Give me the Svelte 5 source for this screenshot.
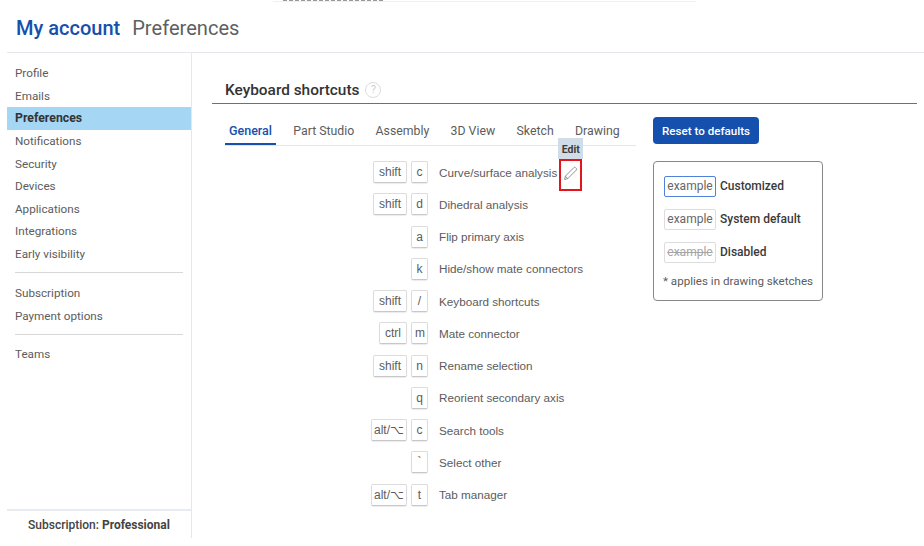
<script lang="ts">
  const menuGroups = [
    ["Profile", "Emails", "Preferences", "Notifications", "Security", "Devices", "Applications", "Integrations", "Early visibility"],
    ["Subscription", "Payment options"],
    ["Teams"],
  ];
  const tabs = ["General", "Part Studio", "Assembly", "3D View", "Sketch", "Drawing"];
  const shortcuts = [
    { mod: "shift", key: "c", label: "Curve/surface analysis", editing: true },
    { mod: "shift", key: "d", label: "Dihedral analysis" },
    { mod: "", key: "a", label: "Flip primary axis" },
    { mod: "", key: "k", label: "Hide/show mate connectors" },
    { mod: "shift", key: "/", label: "Keyboard shortcuts" },
    { mod: "ctrl", key: "m", label: "Mate connector" },
    { mod: "shift", key: "n", label: "Rename selection" },
    { mod: "", key: "q", label: "Reorient secondary axis" },
    { mod: "alt/⌥", key: "c", label: "Search tools" },
    { mod: "", key: "`", label: "Select other" },
    { mod: "alt/⌥", key: "t", label: "Tab manager" },
  ];
</script>

<div class="page">
  <div class="topstrip"><span class="cut"></span></div>
  <header>
    <h1>My account</h1>
    <span class="crumb">Preferences</span>
  </header>
  <div class="body">
    <aside>
      <nav>
        {#each menuGroups as group, g}
          {#if g > 0}<hr />{/if}
          {#each group as item}
            <div class="item" class:active={item === "Preferences"}>{item}</div>
          {/each}
        {/each}
      </nav>
      <div class="plan">Subscription: <b>Professional</b></div>
    </aside>
    <main>
      <div class="title">
        <h2>Keyboard shortcuts</h2>
        <span class="help">?</span>
      </div>
      <div class="columns">
        <section>
          <div class="tabs">
            {#each tabs as tab, i}
              <div class="tab" class:on={i === 0}>{tab}</div>
            {/each}
          </div>
          <div class="rows">
            {#each shortcuts as s}
              <div class="row">
                <div class="keys">
                  {#if s.mod}<kbd class:tight={s.mod.length > 4 && s.mod !== "shift"}>{s.mod}</kbd>{/if}
                  <kbd class="single">{s.key}</kbd>
                </div>
                <span class="label">{s.label}</span>
                {#if s.editing}
                  <span class="edit">
                    <span class="tip">Edit</span>
                    <svg width="15" height="15" viewBox="0 0 16 16" fill="none" stroke="#8a8a8a" stroke-width="1">
                      <path d="M2.5 10.8 11.6 1.7a1.2 1.2 0 0 1 1.7 0l.9.9a1.2 1.2 0 0 1 0 1.7L5.1 13.4 1.7 14.4z" />
                      <path d="M2.5 10.8 5.1 13.4" />
                    </svg>
                  </span>
                {/if}
              </div>
            {/each}
          </div>
        </section>
        <section class="side">
          <button>Reset to defaults</button>
          <div class="legend">
            <div class="lrow"><span class="sample custom">example</span><b>Customized</b></div>
            <div class="lrow"><span class="sample">example</span><b>System default</b></div>
            <div class="lrow"><span class="sample off">example</span><b>Disabled</b></div>
            <div class="note">* applies in drawing sketches</div>
          </div>
        </section>
      </div>
    </main>
  </div>
</div>

<style>
  :global(body) {
    margin: 0;
    background: #fff;
  }

  .page {
    width: 924px;
    height: 546px;
    overflow: hidden;
    font-family: Roboto, "Liberation Sans", sans-serif;
    color: #555;
    box-sizing: border-box;
    padding-left: 7px;
  }

  .topstrip {
    height: 2px;
    margin-left: 266px;
    width: 423px;
    border-bottom: 1px solid #f0f0f0;
    box-sizing: border-box;
    padding-left: 10px;
  }

  /* only the bottom edge of a text line is left in the source crop */
  .cut {
    display: block;
    width: 100px;
    height: 1px;
    background: repeating-linear-gradient(90deg, #999 0 4px, #fff 4px 6px);
  }

  header {
    height: 51px;
    box-sizing: border-box;
    border-bottom: 1px solid #e4e8ee;
    display: flex;
    align-items: baseline;
    gap: 12px;
    padding: 14px 0 0 9px;
  }

  h1 {
    margin: 0;
    font-size: 20px;
    font-weight: 500;
    color: #1650ae;
  }

  .crumb {
    font-size: 20.1px;
    color: #5f5f5f;
  }

  .body {
    display: flex;
    height: 485px;
  }

  aside {
    width: 185px;
    box-sizing: border-box;
    border-right: 1px solid #e4e8ee;
    display: flex;
    flex-direction: column;
    justify-content: space-between;
    padding-top: 9.3px;
  }

  .item {
    height: 22.6px;
    line-height: 22.6px;
    padding-left: 8px;
    font-size: 11.7px;
    color: #5c5c5c;
  }

  .item.active {
    background: #a5d6f4;
    color: #333;
    font-size: 12.3px;
    font-weight: 700;
  }

  hr {
    border: 0;
    border-top: 1px solid #d8d8d8;
    margin: 6px 8px 8px 8px;
  }

  hr:first-of-type {
    margin-bottom: 9.7px;
  }

  .plan {
    height: 29px;
    box-sizing: border-box;
    border-top: 2px solid #e8ecf1;
    font-size: 12px;
    font-weight: 500;
    color: #444;
    text-align: center;
    line-height: 29px;
  }

  .plan b {
    font-weight: 700;
  }

  main {
    flex: 1;
    padding: 25px 7px 0 20px;
  }

  .title {
    display: flex;
    align-items: center;
    gap: 6px;
    height: 24px;
    padding: 0 0 1px 13px;
    border-bottom: 1px solid #707070;
  }

  h2 {
    margin: 0;
    font-size: 15.4px;
    font-weight: 500;
    color: #333;
  }

  .help {
    width: 14px;
    height: 14px;
    border: 1px solid #ddd;
    border-radius: 50%;
    font-size: 10.5px;
    text-align: center;
    line-height: 14px;
    color: #ccc;
  }

  .columns {
    display: flex;
    gap: 17px;
    padding-left: 13px;
  }

  section {
    width: 411px;
  }

  .tabs {
    margin-top: 14px;
    display: flex;
    gap: 13.3px;
    height: 27px;
    border-bottom: 1px solid #e6e6e6;
  }

  .tab {
    padding: 0 4px;
    font-size: 12.3px;
    line-height: 26px;
    color: #5c5c5c;
    height: 27px;
    box-sizing: border-box;
    white-space: nowrap;
  }

  .tab.on {
    color: #1650ae;
    font-weight: 500;
    font-size: 12.5px;
    border-bottom: 2px solid #1650ae;
  }

  .rows {
    padding-top: 10px;
  }

  .row {
    height: 32.25px;
    display: flex;
    align-items: center;
    font-family: "Liberation Sans", Arial, sans-serif;
    font-size: 11.7px;
    color: #5c5c5c;
  }

  .keys {
    width: 203px;
    display: flex;
    justify-content: flex-end;
    gap: 4px;
    margin-right: 11px;
  }

  kbd {
    font: inherit;
    font-size: 12px;
    height: 20px;
    line-height: 20px;
    padding: 0 5px;
    border: 1px solid #dcdcdc;
    border-bottom-color: #c8c8c8;
    border-radius: 2px;
    text-align: center;
    box-shadow: 0 1px 1px rgba(0, 0, 0, 0.08);
  }

  kbd.tight {
    padding: 0 2px;
  }

  kbd.single {
    width: 9px;
    padding: 0 3px;
  }

  .edit {
    position: relative;
    width: 23px;
    height: 32px;
    border: 2px solid #e5131b;
    box-sizing: border-box;
    margin: 6px 0 0 2px;
    display: flex;
    align-items: center;
    justify-content: center;
    padding-bottom: 4px;
  }

  .tip {
    position: absolute;
    left: -3px;
    bottom: calc(100% + 2px);
    width: 25px;
    height: 21px;
    background: #d0dce7;
    color: #3c3c3c;
    font: 700 10.5px Roboto, sans-serif;
    line-height: 23px;
    text-align: center;
  }

  .side {
    width: auto;
    padding-top: 13px;
  }

  button {
    display: block;
    width: 106px;
    height: 27px;
    border: 0;
    border-radius: 4px;
    background: #1650ae;
    color: #fff;
    font: 500 11.6px Roboto, sans-serif;
    padding: 0;
  }

  .legend {
    margin-top: 17px;
    width: 170px;
    height: 140px;
    box-sizing: border-box;
    border: 1px solid #888;
    border-radius: 4px;
    padding: 13px 0 0 10px;
    font-size: 12px;
  }

  .lrow {
    display: flex;
    align-items: center;
    gap: 4px;
    height: 22px;
    margin-bottom: 11px;
    color: #3a3a3a;
  }

  .lrow b {
    font-weight: 500;
  }

  .sample {
    width: 52px;
    height: 21px;
    box-sizing: border-box;
    border: 1px solid #ddd;
    border-radius: 2px;
    text-align: center;
    line-height: 19px;
    color: #666;
    font-size: 12px;
  }

  .sample.custom {
    border-color: #4f82d8;
  }

  .sample.off {
    color: #a5a5a5;
    text-decoration: line-through;
  }

  .note {
    margin: 0 0 0 -1px;
    font-size: 11.6px;
    white-space: nowrap;
    color: #5c5c5c;
  }
</style>
